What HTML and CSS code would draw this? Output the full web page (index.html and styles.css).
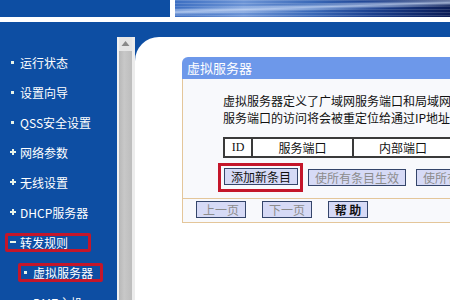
FILE: index.html
```html
<!DOCTYPE html>
<html lang="zh-CN">
<head>
  <meta charset="UTF-8">
  <title>虚拟服务器</title>
  <link rel="stylesheet" href="styles.css">
</head>
<body>
  <!-- top banner -->
  <div class="banner">
    <div class="logo"></div>
    <div class="pic"></div>
  </div>

  <div class="frame">
    <!-- left menu -->
    <ul class="menu">
      <li class="item"><span class="inner"><svg class="mk" width="10" height="10"><rect x="1" y="4" width="3" height="3" fill="#e8f4e8"/></svg>运行状态</span></li>
      <li class="item"><span class="inner"><svg class="mk" width="10" height="10"><rect x="1" y="4" width="3" height="3" fill="#e8f4e8"/></svg>设置向导</span></li>
      <li class="item"><span class="inner"><svg class="mk" width="10" height="10"><rect x="1" y="4" width="3" height="3" fill="#e8f4e8"/></svg>QSS安全设置</span></li>
      <li class="item"><span class="inner"><svg class="mk" width="10" height="10"><rect x="0" y="4" width="6" height="2" fill="#e8f4e8"/><rect x="2" y="2" width="2" height="6" fill="#e8f4e8"/></svg>网络参数</span></li>
      <li class="item"><span class="inner"><svg class="mk" width="10" height="10"><rect x="0" y="4" width="6" height="2" fill="#e8f4e8"/><rect x="2" y="2" width="2" height="6" fill="#e8f4e8"/></svg>无线设置</span></li>
      <li class="item"><span class="inner"><svg class="mk" width="10" height="10"><rect x="0" y="4" width="6" height="2" fill="#e8f4e8"/><rect x="2" y="2" width="2" height="6" fill="#e8f4e8"/></svg>DHCP服务器</span></li>
      <li class="item"><span class="inner boxed wide"><svg class="mk" width="10" height="10"><rect x="0" y="4" width="6" height="2" fill="#e8f4e8"/></svg>转发规则</span></li>
      <li class="item sub"><span class="inner boxed"><svg class="mk" width="10" height="10"><rect x="1" y="4" width="3" height="3" fill="#e8f4e8"/></svg>虚拟服务器</span></li>
      <li class="item sub"><span class="inner"><svg class="mk" width="10" height="10"><rect x="1" y="4" width="3" height="3" fill="#e8f4e8"/></svg>DMZ主机</span></li>
    </ul>

    <!-- scrollbar of the menu frame -->
    <div class="scroll">
      <div class="arrow"><svg width="13" height="14"><polygon points="2.5,9 10.5,9 6.5,4" fill="#8a8a8a"/></svg></div>
    </div>

    <!-- main frame -->
    <div class="main">
      <div class="panel">
        <div class="title">虚拟服务器</div>
        <div class="body">
          <p class="desc">虚拟服务器定义了广域网服务端口和局域网服务器之间的映射关系，<br>服务端口的访问将会被重定位给通过IP地址指定的局域网服务器。</p>
          <table class="list">
            <tr>
              <th class="c-id">ID</th>
              <th class="c-svc">服务端口</th>
              <th class="c-in">内部端口</th>
              <th class="c-ip">IP地址</th>
            </tr>
          </table>
          <div class="actions">
            <span class="redbox"><button class="btn">添加新条目</button></span>
            <button class="btn off">使所有条目生效</button>
            <button class="btn off">使所有条目失效</button>
          </div>
        </div>
        <div class="foot">
          <button class="btn off page">上一页</button>
          <button class="btn off page">下一页</button>
          <button class="btn help">帮 助</button>
        </div>
      </div>
    </div>
  </div>
</body>
</html>
```

FILE: styles.css
```css
body {
  margin: 0;
  width: 450px;
  height: 300px;
  overflow: hidden;
  background: #fff;
  font-family: "Noto Sans CJK SC", "Liberation Sans", sans-serif;
  font-size: 12px;
}

/* banner */
.banner {
  display: flex;
  height: 17px;
  background: #fff;
}
.logo {
  width: 170px;
  background: #0d4ea3;
}
.pic {
  flex: 1;
  margin-left: 5px;
  background:
    linear-gradient(178deg, rgba(255,255,255,0) 30%, rgba(210,225,250,0.7) 45%, rgba(255,255,255,0) 60%),
    repeating-linear-gradient(180deg, rgba(255,255,255,0.15) 0 1px, rgba(0,0,0,0) 1px 3px),
    linear-gradient(90deg, #3d6fc2 0%, #6c94d6 25%, #3a69b8 50%, #1b3f8e 72%, #0b1c55 100%);
}

.frame {
  display: flex;
  margin-top: 5px;
  height: 278px;
  overflow: hidden;
  background: #0d4ea3;
}

/* left menu */
.menu {
  list-style: none;
  margin: 0;
  padding: 25px 0 0 0;
  width: 117px;
  flex: none;
  overflow: hidden;
}
.item {
  height: 30px;
  display: flex;
  align-items: center;
  padding-left: 5px;
  color: #fff;
  font-size: 12px;
  white-space: nowrap;
}
.item.sub {
  padding-left: 18px;
}
.inner {
  display: flex;
  align-items: center;
  height: 13px;
  border: 3px solid transparent;
  padding-left: 2px;
}
.inner.boxed {
  border-color: #c4162a;
  border-radius: 2px;
  width: 77px;
}
.inner.wide {
  width: 78px;
}
.mk {
  flex: none;
}

/* scrollbar */
.scroll {
  flex: none;
  width: 13px;
  margin-top: 15px;
  border-left: 2px solid #f2f2f2;
  border-right: 3px solid #ececec;
  background: linear-gradient(90deg, #b8b8b8, #c8c8c8 40%, #bdbdbd);
}
.arrow {
  height: 14px;
  background: #e6e6e6;
}

/* main frame */
.main {
  flex: 1;
  margin-top: 15px;
  background: #fff;
  border-top-left-radius: 24px;
  padding: 20px 0 0 47px;
  overflow: hidden;
}
.panel {
  width: 440px;
  flex: none;
}
.title {
  height: 22px;
  line-height: 22px;
  padding-left: 5px;
  background: #6d98ea;
  color: #fff;
  font-size: 13px;
  border-top-left-radius: 6px;
}
.body {
  background: #f8f9fc;
  border-left: 1px solid #e4c69a;
  border-bottom: 1px solid #e4c69a;
  padding: 13px 0 6px 40px;
}
.desc {
  margin: 0;
  font-size: 12px;
  line-height: 17px;
  color: #111;
  white-space: nowrap;
}
.list {
  margin-top: 11px;
  border-collapse: collapse;
  border: 2px solid #3a3a3a;
  background: #fff;
  table-layout: fixed;
}
.list th {
  height: 17px;
  border: 2px solid #3a3a3a;
  font-weight: normal;
  font-size: 12px;
  color: #111;
  padding: 0;
}
.c-id { width: 26px; font-family: "Liberation Serif", serif; }
.c-svc { width: 99px; }
.c-in { width: 98px; }
.c-ip { width: 120px; }

.actions {
  display: flex;
  align-items: center;
  margin-top: 5px;
}
.redbox {
  display: flex;
  width: 76px;
  height: 21px;
  margin-left: -5px;
  border: 3px solid #c4162a;
  padding: 2px 0 0 3px;
  box-sizing: content-box;
}
.btn {
  height: 17px;
  padding: 0 4px;
  background: #d6daf6;
  border: 1px solid #34456a;
  font-family: inherit;
  font-size: 12px;
  line-height: 15px;
  color: #111;
  white-space: nowrap;
}
.redbox .btn {
  width: 74px;
}
.actions .btn.off {
  width: 98px;
  margin-left: 5px;
  margin-right: 5px;
}
.btn.off {
  color: #8c8c8c;
}

.foot {
  display: flex;
  gap: 16px;
  padding: 2px 0 4px 13px;
  background: #f8f9fc;
  border-left: 1px solid #e4c69a;
  border-bottom: 1px solid #e4c69a;
}
.page {
  width: 50px;
}
.help {
  width: 40px;
  font-weight: bold;
}
```
